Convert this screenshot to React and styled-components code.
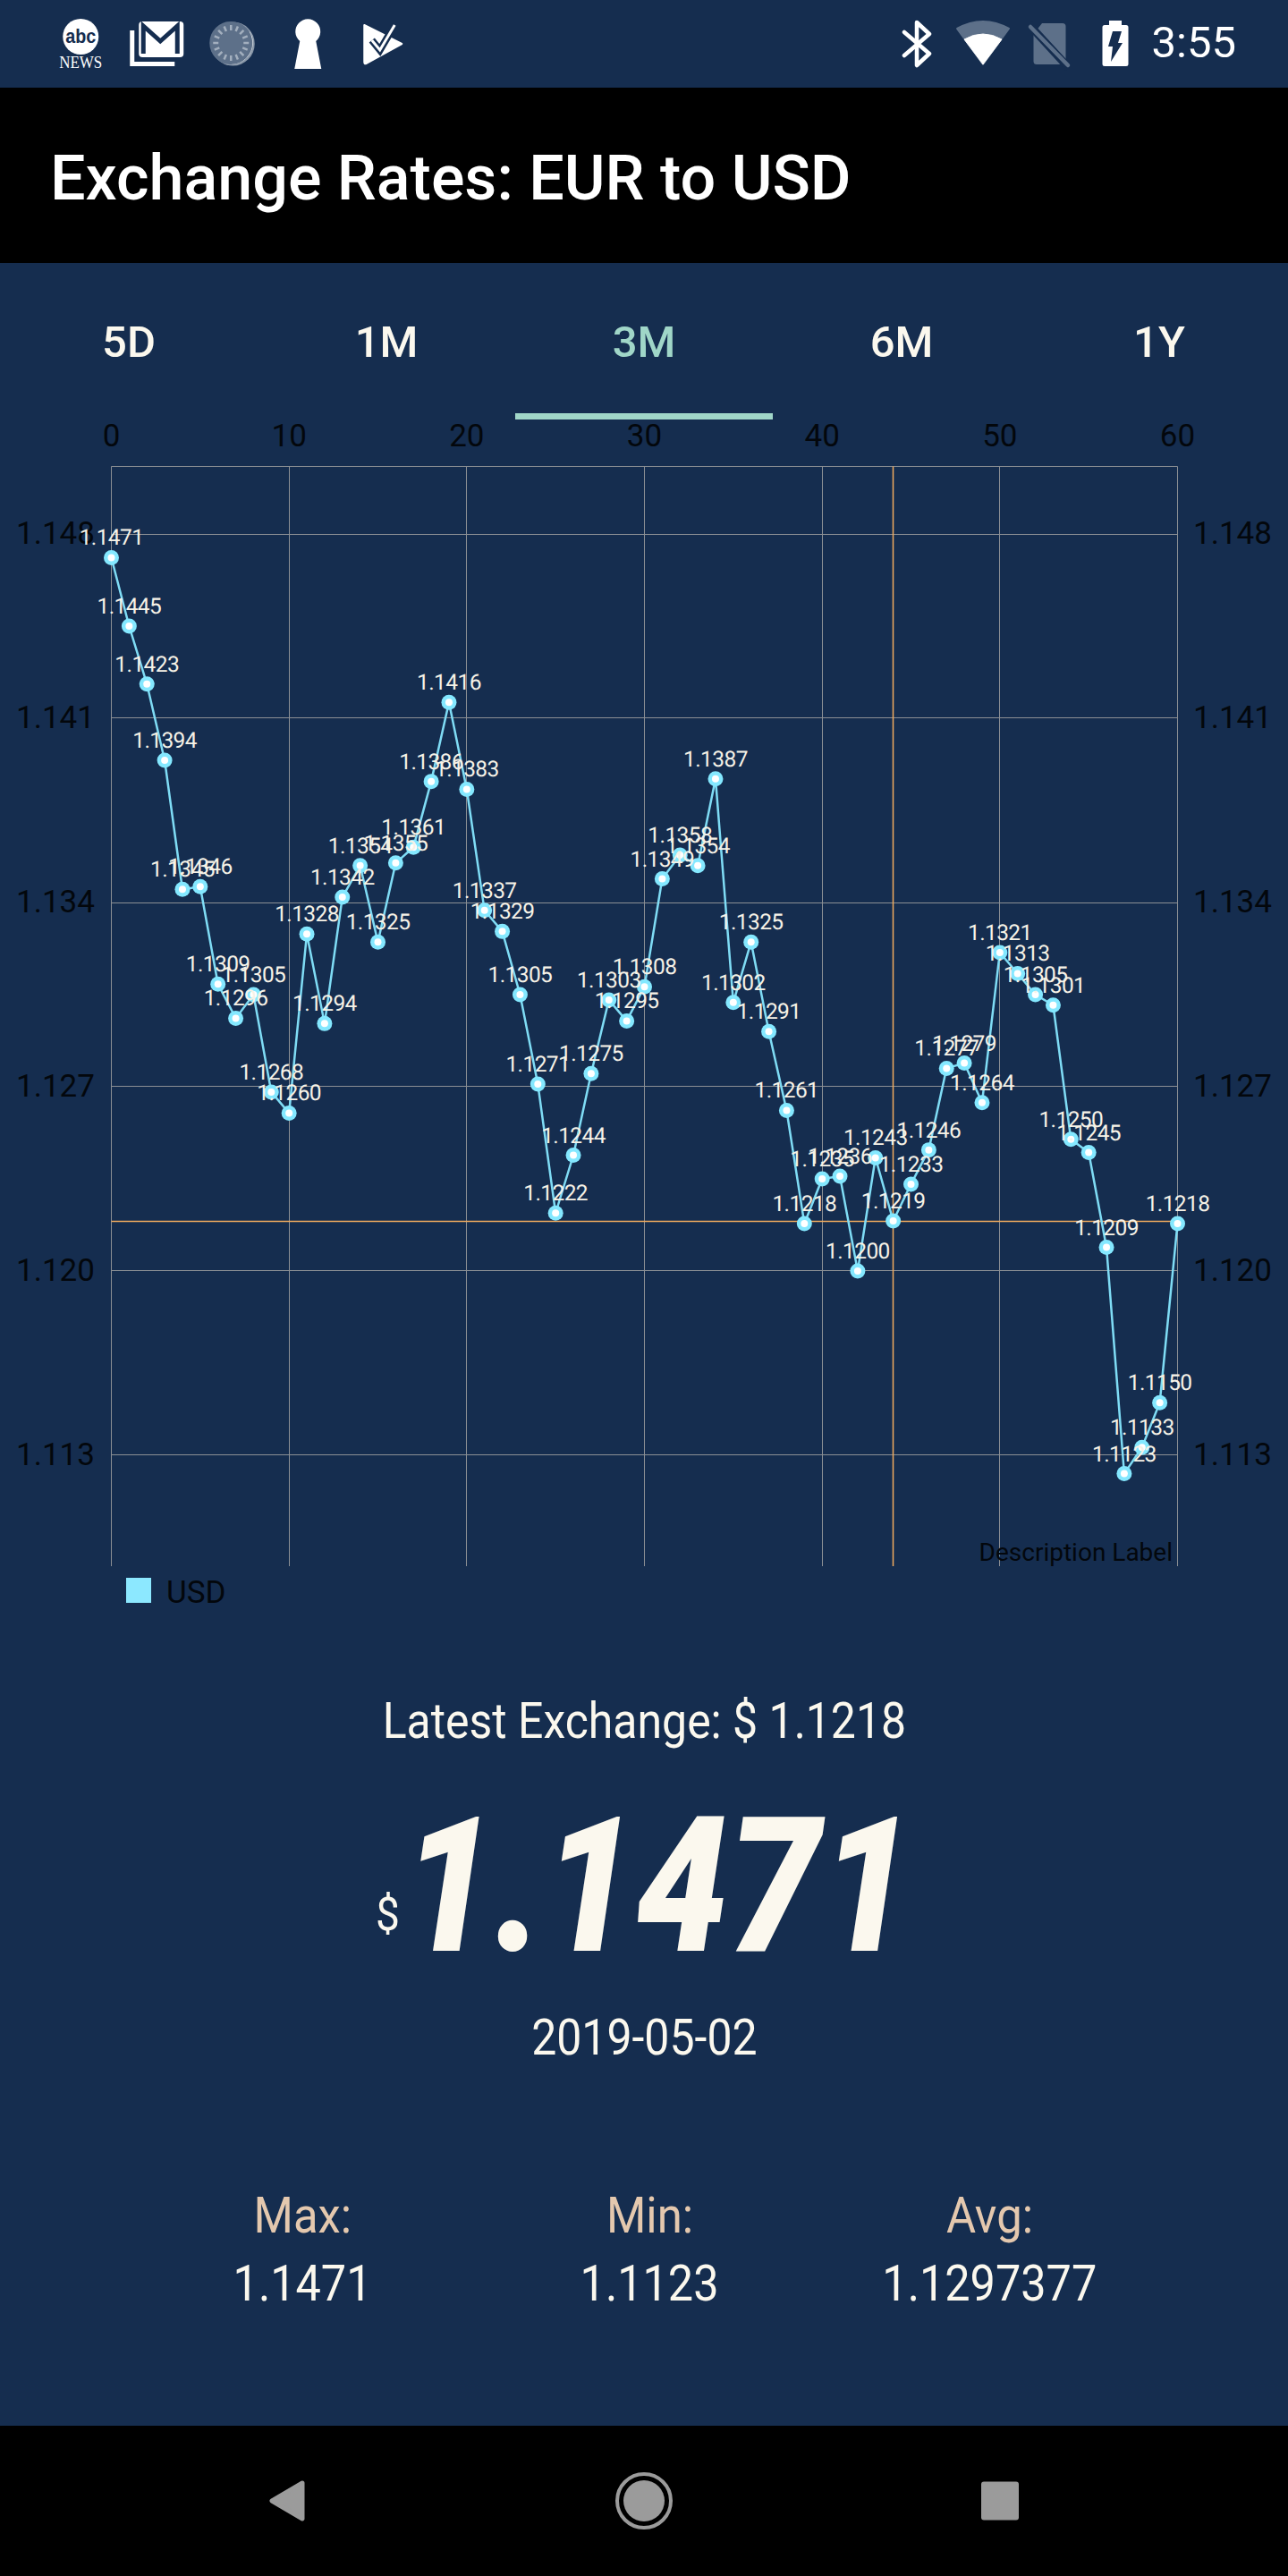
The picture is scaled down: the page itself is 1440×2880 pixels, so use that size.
import React from "react";
import styled, { createGlobalStyle } from "styled-components";

const NAVY = "#152d4f";
const CREAM = "#fbf8ee";
const MUTED = "#5d7089";

const data = [
  1.1471, 1.1445, 1.1423, 1.1394, 1.1345, 1.1346, 1.1309, 1.1296, 1.1305, 1.1268,
  1.126, 1.1328, 1.1294, 1.1342, 1.1354, 1.1325, 1.1355, 1.1361, 1.1386, 1.1416,
  1.1383, 1.1337, 1.1329, 1.1305, 1.1271, 1.1222, 1.1244, 1.1275, 1.1303, 1.1295,
  1.1308, 1.1349, 1.1358, 1.1354, 1.1387, 1.1302, 1.1325, 1.1291, 1.1261, 1.1218,
  1.1235, 1.1236, 1.12, 1.1243, 1.1219, 1.1233, 1.1246, 1.1277, 1.1279, 1.1264,
  1.1321, 1.1313, 1.1305, 1.1301, 1.125, 1.1245, 1.1209, 1.1123, 1.1133, 1.115, 1.1218,
];

const LEFT = 124.5;
const RIGHT = 1316.5;
const TOP = 521.5;
const BOTTOM = 1751;
const xAt = (i) => LEFT + (i * (RIGHT - LEFT)) / 60;
const yAt = (v) => 597 + ((1.148 - v) / 0.007) * 206;
const crisp = (n) => Math.floor(n) + 0.5;

const GlobalStyle = createGlobalStyle`
  html, body { margin: 0; padding: 0; background: ${NAVY}; }
  * { box-sizing: border-box; }
`;

const Page = styled.div`
  width: 1440px;
  height: 2880px;
  display: flex;
  flex-direction: column;
  background: ${NAVY};
  font-family: Roboto, "Liberation Sans", sans-serif;
  overflow: hidden;
`;

const StatusBar = styled.header`
  height: 98px;
  flex: none;
  display: flex;
  align-items: center;
  justify-content: space-between;
  padding: 0 58px 2px 48px;
`;
const IconGroup = styled.div`
  display: flex;
  align-items: center;
`;
const StatusIcon = styled.svg`
  display: block;
  width: ${(p) => p.$slot}px;
  height: 60px;
  flex: none;
  overflow: visible;
`;
const Clock = styled.span`
  font-size: 49px;
  line-height: 60px;
  color: #fff;
  margin-left: 4px;
`;

const Toolbar = styled.div`
  height: 196px;
  flex: none;
  background: #000;
  display: flex;
  align-items: center;
  padding: 6px 56px 0;
`;
const Title = styled.h1`
  margin: 0;
  font-size: 70px;
  font-weight: 500;
  color: #fff;
  line-height: 82px;
`;

const Tabs = styled.nav`
  height: 174px;
  flex: none;
  display: grid;
  grid-template-columns: repeat(5, 288px);
`;
const Tab = styled.div`
  display: flex;
  justify-content: center;
  padding-top: 60px;
  height: 175px;
  font-size: 49px;
  font-weight: 500;
  line-height: 58px;
  color: ${(p) => (p.$active ? "#a0d6c8" : CREAM)};
  border-bottom: 7px solid ${(p) => (p.$active ? "#a0d6c8" : "transparent")};
`;

const ChartSvg = styled.svg`
  display: block;
  width: 1440px;
  height: 1342px;
  flex: none;
`;
const AxisText = styled.text`
  font-family: Roboto, sans-serif;
  font-size: 35px;
  fill: #03070c;
`;
const ValueText = styled.text`
  font-family: Roboto, sans-serif;
  font-size: 24.5px;
  letter-spacing: -0.6px;
  text-rendering: geometricPrecision;
  fill: #f6f2e7;
  text-anchor: middle;
`;
const DescText = styled.text`
  font-family: Roboto, sans-serif;
  font-size: 28px;
  fill: #03070c;
  text-anchor: end;
`;

const Summary = styled.section`
  flex: 1;
  display: flex;
  flex-direction: column;
  align-items: center;
  color: ${CREAM};
  padding-top: 82px;
`;
const Condensed = styled.div`
  font-size: ${(p) => p.$size}px;
  line-height: ${(p) => p.$lh}px;
  font-weight: ${(p) => p.$weight || 400};
  color: ${(p) => p.$color || CREAM};
  white-space: nowrap;
  text-align: center;
  transform: scaleX(${(p) => p.$sx || 0.9});
`;
const PriceRow = styled.div`
  display: flex;
  align-items: flex-end;
  justify-content: center;
  width: 100%;
  height: 230px;
  margin-top: 38px;
  padding-right: 19px;
`;
const Currency = styled.span`
  font-size: 52px;
  line-height: 60px;
  padding-bottom: 53px;
  display: block;
  width: 30px;
  transform: scaleX(0.92);
  transform-origin: left center;
`;
const Price = styled.span`
  font-size: 211px;
  line-height: 230px;
  font-weight: 900;
  font-style: italic;
  display: block;
  width: 551px;
  white-space: nowrap;
  transform: scaleX(0.872);
  transform-origin: left center;
`;
const DateLine = styled.div`
  margin-top: 21px;
`;
const Stats = styled.div`
  margin-top: 133px;
  width: 100%;
  display: grid;
  grid-template-columns: 388px 388px 372px;
  padding-left: 144px;
`;
const Stat = styled.div`
  display: flex;
  flex-direction: column;
  align-items: center;
  gap: 10px;
`;

const NavBar = styled.footer`
  height: 168px;
  flex: none;
  background: #000;
  display: grid;
  grid-template-columns: repeat(3, 398.5px);
  padding-left: 122px;
  align-items: center;
  justify-items: center;
`;
const NavIcon = styled.svg`
  display: block;
  width: 80px;
  height: 80px;
  fill: #9b9b9b;
`;

const AbcIcon = () => (
  <StatusIcon $slot={84.5} viewBox="-42.25 0 84.5 60">
    <circle cx="0" cy="23" r="20" fill="#fff" />
    <text x="0" y="30" textAnchor="middle" fontFamily="Liberation Sans, sans-serif" fontWeight="700" fontSize="22" fill={NAVY} textLength="34" lengthAdjust="spacingAndGlyphs">abc</text>
    <text x="0" y="58" textAnchor="middle" fontFamily="Liberation Serif, serif" fontSize="18" fill="#fff" textLength="48" lengthAdjust="spacingAndGlyphs">NEWS</text>
  </StatusIcon>
);
const MailIcon = () => (
  <StatusIcon $slot={84.5} viewBox="-42.25 0 84.5 60">
    <rect x="-20" y="6" width="50" height="40" rx="4" fill="#fff" />
    <polyline points="-15,42 -15,11 4,28 23,11 23,42" fill="none" stroke={NAVY} strokeWidth="5" />
    <polyline points="-27.5,16 -27.5,53.5 20,53.5" fill="none" stroke="#fff" strokeWidth="5" />
  </StatusIcon>
);
const DialIcon = () => (
  <StatusIcon $slot={84.5} viewBox="-42.25 0 84.5 60">
    <circle cx="1" cy="31" r="24.5" fill="#8a98a9" />
    <path d="M19 16 A24 24 0 0 1 -12 51 A27 27 0 0 0 19 16 Z" fill="#fff" />
    <circle cx="-1" cy="30" r="24" fill={MUTED} />
    {Array.from({ length: 16 }, (_, i) => (
      <line key={i} x1="0" y1="-20" x2="0" y2="-14" stroke="#a3afbe" strokeWidth="2.5" transform={`translate(-1 30) rotate(${i * 22.5})`} />
    ))}
  </StatusIcon>
);
const KeyIcon = () => (
  <StatusIcon $slot={84.5} viewBox="-42.25 0 84.5 60">
    <path d="M-15 59 L-9 28 A14 14 0 1 1 9 28 L15 59 Z" fill="#fff" />
  </StatusIcon>
);
const TasksIcon = () => (
  <StatusIcon $slot={84.5} viewBox="-42.25 0 84.5 60">
    <path d="M-21 10 L21 31 L-19 53 Q-21 54 -21 51 Z" fill="#fff" stroke="#fff" strokeWidth="2" strokeLinejoin="round" />
    <polyline points="-12.5,27 -3.5,38 13,10" fill="none" stroke={NAVY} strokeWidth="8" />
    <polyline points="-12.5,27 -3.5,38 13,10" fill="none" stroke="#fff" strokeWidth="3" />
  </StatusIcon>
);
const BluetoothIcon = () => (
  <StatusIcon $slot={74} viewBox="-37 0 74 60">
    <polyline points="-14,18 14,42 0,55 0,7 14,20 -14,44" fill="none" stroke="#fff" strokeWidth="4.5" strokeLinejoin="round" strokeLinecap="round" />
  </StatusIcon>
);
const WifiIcon = () => (
  <StatusIcon $slot={74} viewBox="-37 0 74 60">
    <path d="M0 54 L-29 14 Q0 -2 29 14 Z" fill={MUTED} stroke={MUTED} strokeWidth="2" strokeLinejoin="round" />
    <path d="M0 54 L-21 26 Q0 14 21 26 Z" fill="#fff" stroke="#fff" strokeWidth="1" strokeLinejoin="round" />
  </StatusIcon>
);
const SimOffIcon = () => (
  <StatusIcon $slot={74} viewBox="-37 0 74 60">
    <path d="M-8 8 H15 a3.5 3.5 0 0 1 3.5 3.5 V50.5 a3.5 3.5 0 0 1 -3.5 3.5 H-14 a3.5 3.5 0 0 1 -3.5 -3.5 V20 Z" fill={MUTED} />
    <line x1="-23" y1="9" x2="22" y2="58" stroke={NAVY} strokeWidth="9" />
    <line x1="-21" y1="12" x2="21" y2="55" stroke={MUTED} strokeWidth="4.5" strokeLinecap="round" />
  </StatusIcon>
);
const BatteryIcon = () => (
  <StatusIcon $slot={74} viewBox="-37 0 74 60">
    <path d="M-7 5 H7 V10 H12 a2.5 2.5 0 0 1 2.5 2.5 V53.5 a2.5 2.5 0 0 1 -2.5 2.5 H-12 a2.5 2.5 0 0 1 -2.5 -2.5 V12.5 a2.5 2.5 0 0 1 2.5 -2.5 H-7 Z" fill="#fff" />
    <polygon points="-3,17 7,17 3,30 8,30 -5,51 -3,34 -8,34" fill={NAVY} />
  </StatusIcon>
);

const Chart = () => {
  const linePts = data.map((v, i) => `${xAt(i)},${yAt(v)}`).join(" ");
  const hLines = [1.148, 1.141, 1.134, 1.127, 1.12, 1.113];
  const vLines = [0, 10, 20, 30, 40, 50, 60];
  return (
    <ChartSvg viewBox="0 468 1440 1342">
      <g stroke="#8b8f94" strokeWidth="1">
        <line x1={LEFT} y1={TOP} x2={RIGHT} y2={TOP} />
        {hLines.map((v) => (
          <line key={v} x1={LEFT} y1={crisp(yAt(v))} x2={RIGHT} y2={crisp(yAt(v))} />
        ))}
        {vLines.map((i) => (
          <line key={i} x1={crisp(xAt(i))} y1={TOP} x2={crisp(xAt(i))} y2={BOTTOM} />
        ))}
      </g>
      {vLines.map((i) => (
        <AxisText key={i} x={xAt(i)} y="499" textAnchor="middle">{i}</AxisText>
      ))}
      {hLines.map((v) => (
        <React.Fragment key={v}>
          <AxisText x="18" y={yAt(v) + 11}>{v.toFixed(3)}</AxisText>
          <AxisText x="1334" y={yAt(v) + 11}>{v.toFixed(3)}</AxisText>
        </React.Fragment>
      ))}
      <DescText x="1311" y="1745">Description Label</DescText>
      <line x1={LEFT} y1={crisp(yAt(1.1219))} x2={RIGHT} y2={crisp(yAt(1.1219))} stroke="#f0aa5e" strokeWidth="1.5" />
      <line x1={crisp(xAt(44))} y1={TOP} x2={crisp(xAt(44))} y2={BOTTOM} stroke="#f0aa5e" strokeWidth="1.5" />
      <polyline points={linePts} fill="none" stroke="#7fdcf5" strokeWidth="2.5" />
      {data.map((v, i) => (
        <g key={i}>
          <circle cx={xAt(i)} cy={yAt(v)} r="8.5" fill="#84e8ff" />
          <circle cx={xAt(i)} cy={yAt(v)} r="4" fill="#fff" />
        </g>
      ))}
      {data.map((v, i) => (
        <ValueText key={i} x={xAt(i)} y={yAt(v) - 14}>{v.toFixed(4)}</ValueText>
      ))}
      <rect x="141" y="1764" width="28" height="28" fill="#8ce8ff" />
      <AxisText x="186" y="1792">USD</AxisText>
    </ChartSvg>
  );
};

export default function App() {
  return (
    <Page>
      <GlobalStyle />
      <StatusBar>
        <IconGroup>
          <AbcIcon />
          <MailIcon />
          <DialIcon />
          <KeyIcon />
          <TasksIcon />
        </IconGroup>
        <IconGroup>
          <BluetoothIcon />
          <WifiIcon />
          <SimOffIcon />
          <BatteryIcon />
          <Clock>3:55</Clock>
        </IconGroup>
      </StatusBar>
      <Toolbar>
        <Title>Exchange Rates: EUR to USD</Title>
      </Toolbar>
      <Tabs>
        <Tab>5D</Tab>
        <Tab>1M</Tab>
        <Tab $active>3M</Tab>
        <Tab>6M</Tab>
        <Tab>1Y</Tab>
      </Tabs>
      <Chart />
      <Summary>
        <Condensed $size={55} $lh={64} $sx={0.908}>Latest Exchange: $ 1.1218</Condensed>
        <PriceRow>
          <Currency>$</Currency>
          <Price>1.1471</Price>
        </PriceRow>
        <DateLine>
          <Condensed $size={56} $lh={66} $sx={0.893}>2019-05-02</Condensed>
        </DateLine>
        <Stats>
          <Stat>
            <Condensed $size={56} $lh={66} $sx={0.907} $color="#e4c8ae">Max:</Condensed>
            <Condensed $size={56} $lh={66} $sx={0.9}>1.1471</Condensed>
          </Stat>
          <Stat>
            <Condensed $size={56} $lh={66} $sx={0.907} $color="#e4c8ae">Min:</Condensed>
            <Condensed $size={56} $lh={66} $sx={0.9}>1.1123</Condensed>
          </Stat>
          <Stat>
            <Condensed $size={56} $lh={66} $sx={0.907} $color="#e4c8ae">Avg:</Condensed>
            <Condensed $size={56} $lh={66} $sx={0.9}>1.1297377</Condensed>
          </Stat>
        </Stats>
      </Summary>
      <NavBar>
        <NavIcon viewBox="-40 -40 80 80">
          <polygon points="17,-20 -17,0 17,20" stroke="#9b9b9b" strokeWidth="5" strokeLinejoin="round" />
        </NavIcon>
        <NavIcon viewBox="-40 -40 80 80">
          <circle r="23" />
          <circle r="30" fill="none" stroke="#9b9b9b" strokeWidth="4" />
        </NavIcon>
        <NavIcon viewBox="-40 -40 80 80">
          <rect x="-21" y="-21.5" width="42" height="43" rx="3" />
        </NavIcon>
      </NavBar>
    </Page>
  );
}
